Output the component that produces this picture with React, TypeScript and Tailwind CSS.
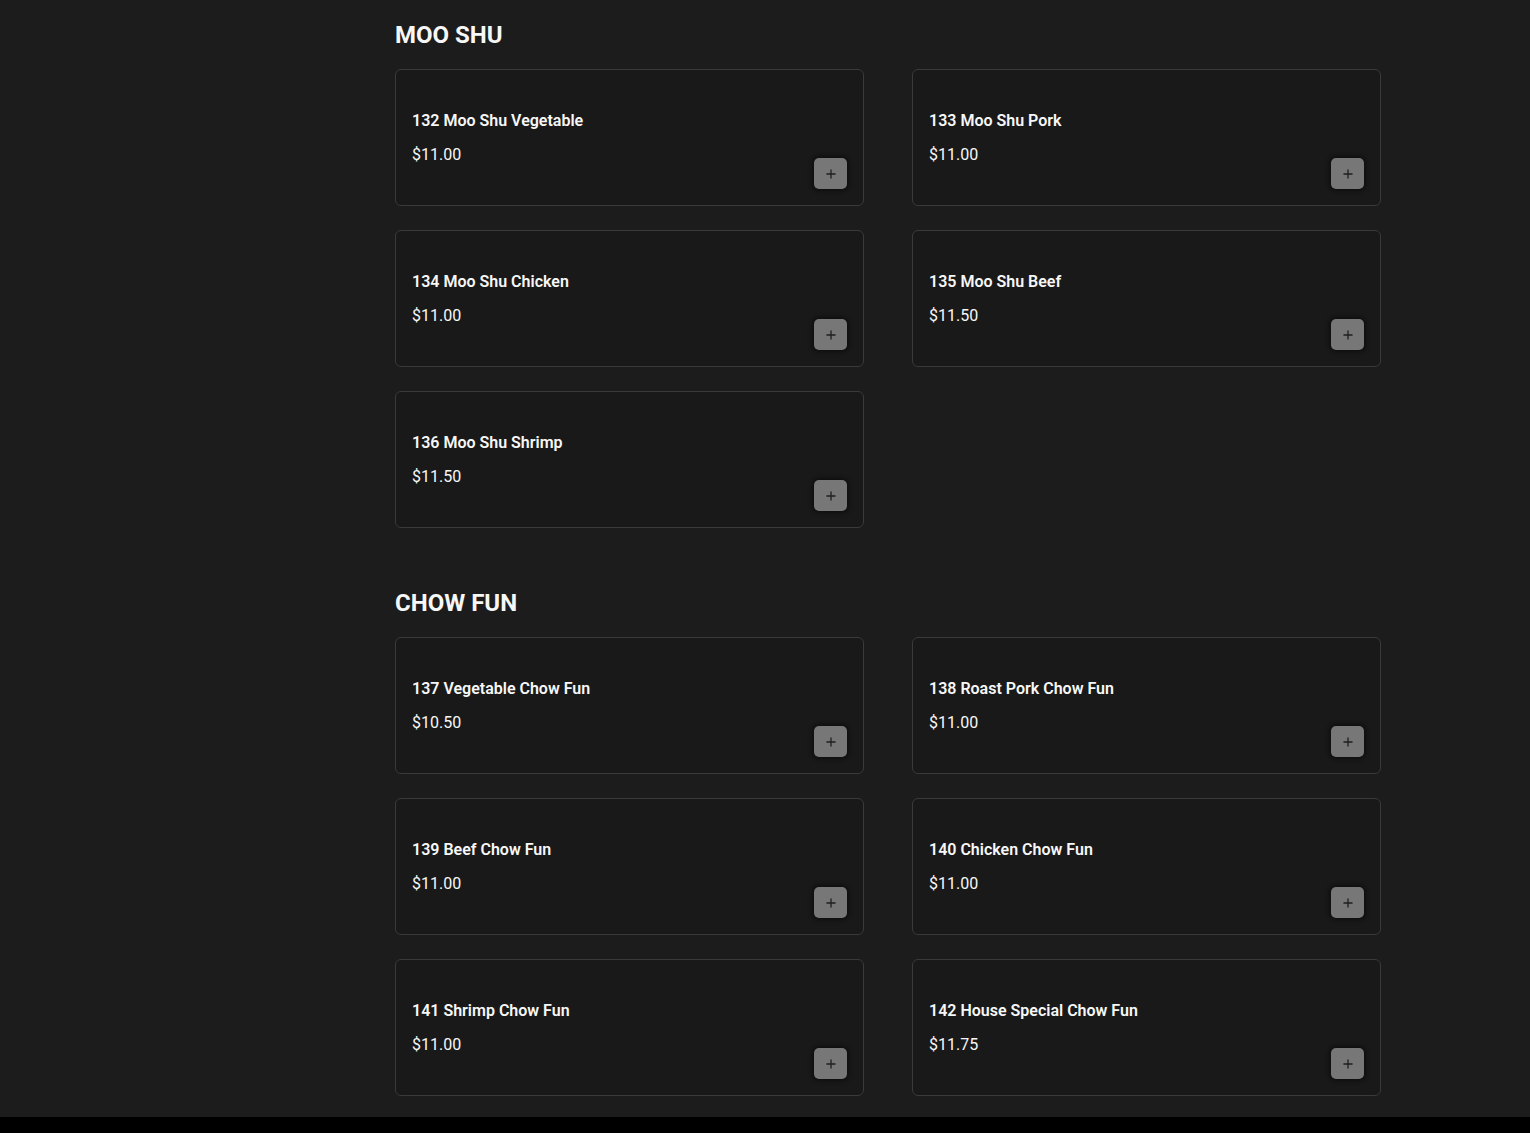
import { Plus } from 'lucide-react';

interface MenuItem {
  id: string;
  name: string;
  price: number;
}

interface Section {
  title: string;
  items: MenuItem[];
}

const sections: Section[] = [
  {
    title: 'MOO SHU',
    items: [
      { id: '132', name: '132 Moo Shu Vegetable', price: 11 },
      { id: '133', name: '133 Moo Shu Pork', price: 11 },
      { id: '134', name: '134 Moo Shu Chicken', price: 11 },
      { id: '135', name: '135 Moo Shu Beef', price: 11.5 },
      { id: '136', name: '136 Moo Shu Shrimp', price: 11.5 },
    ],
  },
  {
    title: 'CHOW FUN',
    items: [
      { id: '137', name: '137 Vegetable Chow Fun', price: 10.5 },
      { id: '138', name: '138 Roast Pork Chow Fun', price: 11 },
      { id: '139', name: '139 Beef Chow Fun', price: 11 },
      { id: '140', name: '140 Chicken Chow Fun', price: 11 },
      { id: '141', name: '141 Shrimp Chow Fun', price: 11 },
      { id: '142', name: '142 House Special Chow Fun', price: 11.75 },
    ],
  },
];

function ItemCard({ item }: { item: MenuItem }) {
  return (
    <div className="h-[137px] rounded-md border border-[#3a3a3a] bg-[#191919] p-4 flex justify-between">
      <div className="flex flex-col justify-center gap-[10px]">
        <p className="text-base leading-6 font-semibold text-[#f7f7f7]">{item.name}</p>
        <p className="text-base leading-6 text-[#f7f7f7]">${item.price.toFixed(2)}</p>
      </div>
      <button className="self-end w-[33px] h-[31px] rounded-[5px] bg-[#777777] flex items-center justify-center shadow-[0_0_4px_2px_rgba(0,0,0,0.45)]">
        <Plus className="w-3.5 h-3.5 text-[#1f1f1f]" strokeWidth={2.25} />
      </button>
    </div>
  );
}

export default function App() {
  return (
    <div className="min-h-screen bg-black" style={{ fontFamily: 'Roboto, "Liberation Sans", sans-serif' }}>
      <div className="bg-[#1c1c1c] pl-[395px] pt-[19px] pb-[21px]">
        {sections.map((section, i) => (
          <section key={section.title} className={i > 0 ? 'mt-[59px]' : ''}>
            <h2 className="text-2xl leading-8 font-bold text-[#f7f7f7] mb-[18px]">{section.title}</h2>
            <div className="grid grid-cols-[469px_469px] gap-x-12 gap-y-6">
              {section.items.map((item) => (
                <ItemCard key={item.id} item={item} />
              ))}
            </div>
          </section>
        ))}
      </div>
    </div>
  );
}
